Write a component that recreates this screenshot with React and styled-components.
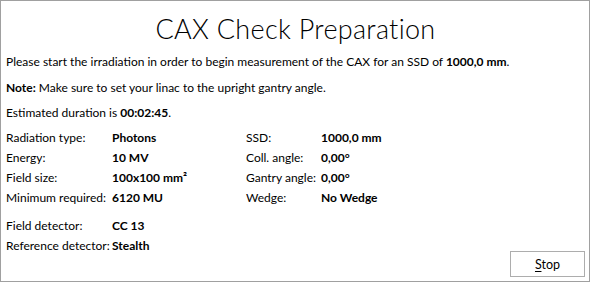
import React from 'react';
import styled, { createGlobalStyle } from 'styled-components';

const GlobalStyle = createGlobalStyle`
  html, body {
    margin: 0;
    padding: 0;
    background: #ffffff;
  }
  body {
    font-family: Lato, 'Noto Sans', sans-serif;
    font-size: 12px;
    color: #000000;
  }
`;

const Window = styled.div`
  box-sizing: border-box;
  width: 590px;
  height: 282px;
  border: 1px solid #a0a0a0;
  display: flex;
  flex-direction: column;
  padding: 0 4px 4px 5px;
`;

const Title = styled.h1`
  margin: 9px 0 0;
  text-align: center;
  font-family: Lato, 'Open Sans', sans-serif;
  font-weight: 300;
  font-size: 27px;
  line-height: 38px;
  letter-spacing: 0.3px;
`;

const Para = styled.p`
  margin: ${props => props.top || 0}px 0 0;
  line-height: 16px;
  white-space: nowrap;
`;

const InfoGrid = styled.div`
  display: grid;
  grid-template-columns: 106px 134px 75px auto;
  grid-auto-rows: 20px;
  align-items: center;
  align-self: flex-start;
  margin-top: ${props => props.top || 0}px;
`;

const Label = styled.span`
  white-space: nowrap;
`;

const Value = styled.span`
  font-weight: bold;
  white-space: nowrap;
`;

const BottomRow = styled.div`
  flex: 1;
  display: flex;
  justify-content: space-between;
  align-items: flex-end;
`;

const Button = styled.button`
  box-sizing: border-box;
  width: 75px;
  height: 26px;
  background: #ffffff;
  border: 1px solid #adadad;
  font-family: inherit;
  font-size: 12.5px;
  color: #000000;
  padding: 0;
  cursor: pointer;

  u {
    text-decoration: underline;
    text-underline-offset: 2px;
  }
`;

const rows = [
  ['Radiation type:', 'Photons', 'SSD:', '1000,0 mm'],
  ['Energy:', '10 MV', 'Coll. angle:', '0,00°'],
  ['Field size:', <>100x100 mm²</>, 'Gantry angle:', '0,00°'],
  ['Minimum required:', '6120 MU', 'Wedge:', 'No Wedge'],
];

const App = () => {
  return (
    <>
      <GlobalStyle />
      <Window>
        <Title>CAX Check Preparation</Title>
        <Para top={6}>
          Please start the irradiation in order to begin measurement of the CAX for an SSD of <b>1000,0 mm</b>.
        </Para>
        <Para top={10}>
          <b>Note:</b> Make sure to set your linac to the upright gantry angle.
        </Para>
        <Para top={9}>
          Estimated duration is <b>00:02:45</b>.
        </Para>
        <InfoGrid top={6}>
          {rows.map((row, i) => (
            <React.Fragment key={i}>
              <Label>{row[0]}</Label>
              <Value>{row[1]}</Value>
              <Label>{row[2]}</Label>
              <Value>{row[3]}</Value>
            </React.Fragment>
          ))}
        </InfoGrid>
        <BottomRow>
          <InfoGrid top={8}>
            <Label>Field detector:</Label>
            <Value>CC 13</Value>
            <span />
            <span />
            <Label>Reference detector:</Label>
            <Value>Stealth</Value>
          </InfoGrid>
          <Button><u>S</u>top</Button>
        </BottomRow>
      </Window>
    </>
  );
};

export default App;
